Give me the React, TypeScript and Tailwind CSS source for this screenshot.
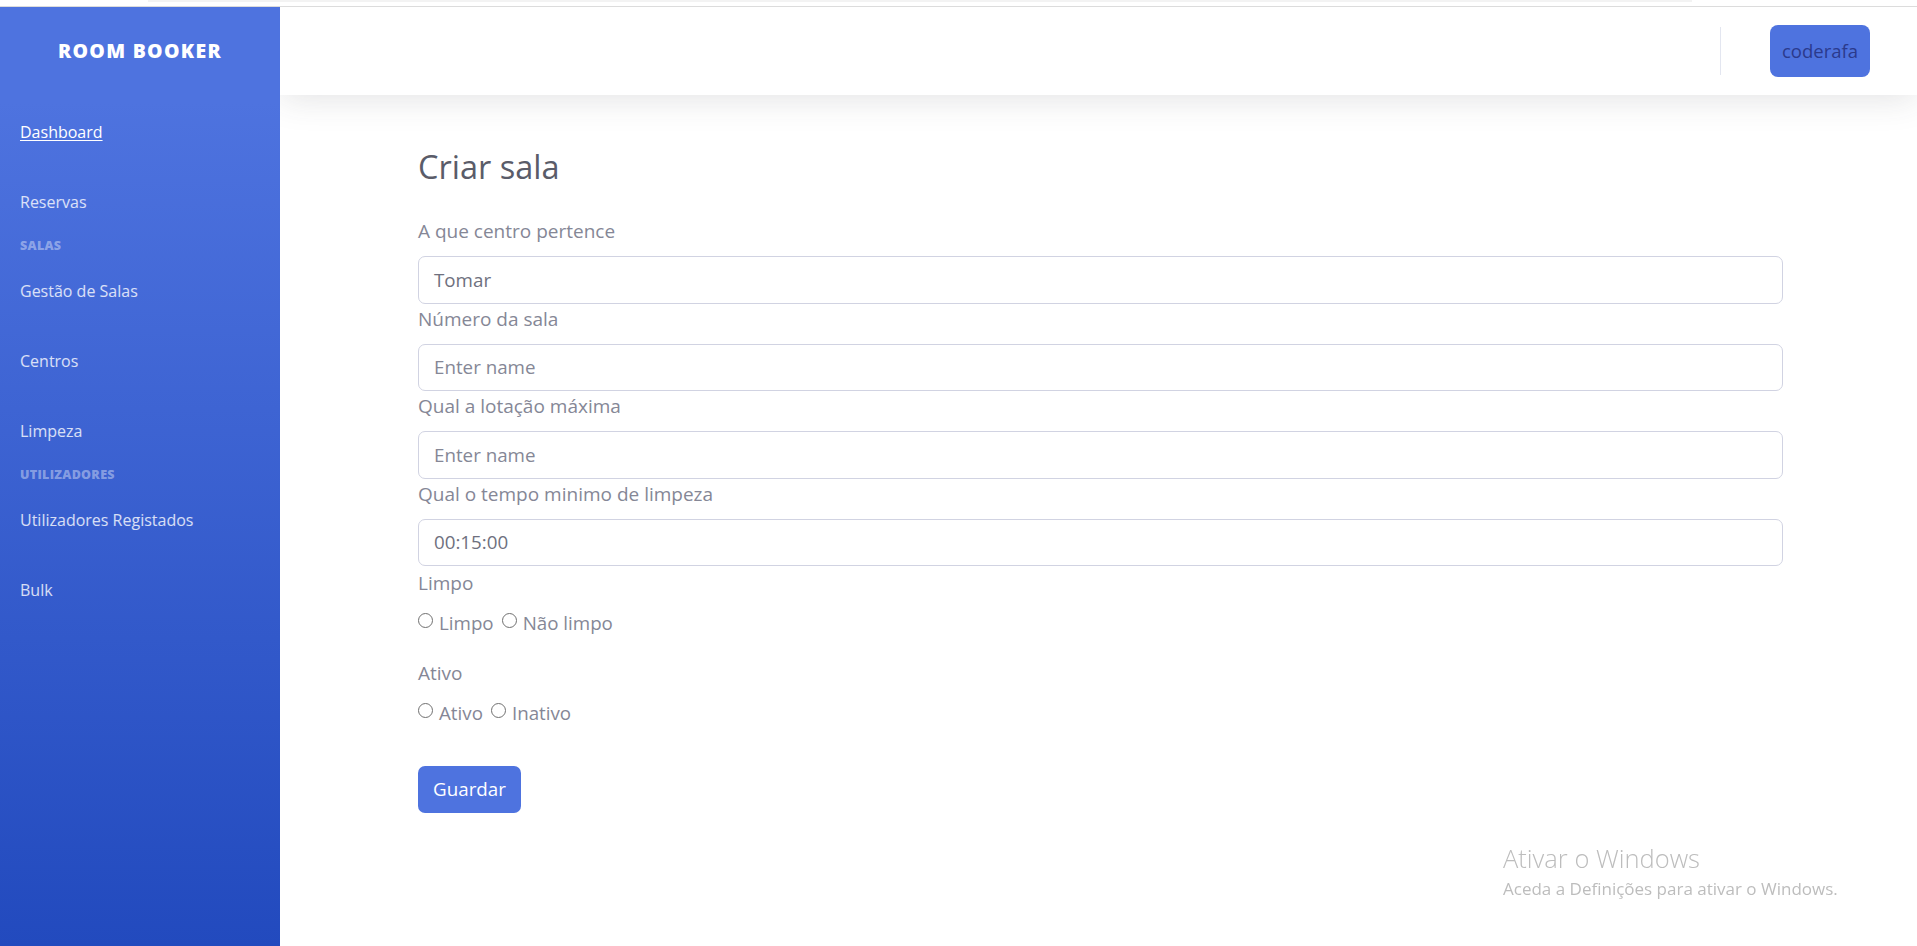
import React from "react";

const font = { fontFamily: '"Open Sans", "Noto Sans", sans-serif' };

function NavItem({ label, active }: { label: string; active?: boolean }) {
  return (
    <div className="h-[70px] flex items-center px-5">
      <span
        className={
          active
            ? "text-[16px] text-white underline underline-offset-2"
            : "text-[16px] text-white/80"
        }
      >
        {label}
      </span>
    </div>
  );
}

function Heading({ label }: { label: string }) {
  return (
    <div className="h-[19px] flex items-center px-5">
      <span className="text-[12.5px] font-extrabold uppercase text-white/40 tracking-[0.3px]">
        {label}
      </span>
    </div>
  );
}

function Field({ label, value, placeholder }: { label: string; value?: string; placeholder?: string }) {
  return (
    <div>
      <div className="h-[30px] leading-[30px] mb-[10px] text-[19px] text-[#858796]">{label}</div>
      <div className="h-[47.5px] rounded-[7px] border border-[#d1d3e2] flex items-center px-[15px] text-[18.75px]">
        {value ? (
          <span className="text-[#6e707e]">{value}</span>
        ) : (
          <span className="text-[#858796]">{placeholder}</span>
        )}
      </div>
    </div>
  );
}

function Radio({ label, first }: { label: string; first?: boolean }) {
  return (
    <span className={first ? "inline-flex items-center" : "inline-flex items-center ml-[8px]"}>
      <span className="inline-block w-[15px] h-[15px] rounded-full border-[1.5px] border-[#707070] bg-white mr-[6px] -mt-[5px]" />
      <span className="text-[18.75px] text-[#858796]">{label}</span>
    </span>
  );
}

export default function App() {
  return (
    <div className="w-[1917px] h-[946px] overflow-hidden bg-white flex flex-col" style={font}>
      <div className="relative z-10 h-[7px] bg-white border-b border-[#dcdcdc]">
        <div className="ml-[148px] w-[1544px] h-[2px] bg-[#f3f3f3]" />
      </div>
      <div className="flex flex-1">
        <aside className="relative z-10 w-[280px] shrink-0 bg-[linear-gradient(180deg,#4e73df_10%,#224abe_100%)]">
          <div className="h-[88px] flex items-center justify-center">
            <span className="text-white font-extrabold uppercase text-[19.5px] tracking-[1.3px]">
              Room Booker
            </span>
          </div>
          <div className="mt-[2px]">
            <NavItem label="Dashboard" active />
            <NavItem label="Reservas" />
            <Heading label="Salas" />
            <NavItem label="Gestão de Salas" />
            <NavItem label="Centros" />
            <NavItem label="Limpeza" />
            <Heading label="Utilizadores" />
            <NavItem label="Utilizadores Registados" />
            <NavItem label="Bulk" />
          </div>
        </aside>
        <main className="flex-1 flex flex-col">
          <header className="h-[88px] bg-white shadow-[0_3px_35px_0_rgba(58,59,69,0.15)] flex items-center justify-end pr-[47px]">
            <div className="w-px h-[48px] bg-[#e3e6f0] mr-[49px]" />
            <div className="h-[52px] px-[12px] rounded-[8px] bg-[#4e73df] flex items-center text-[18.5px] text-[#2b3a8c]">
              coderafa
            </div>
          </header>
          <div className="ml-[138px] w-[1365px] pt-[51px]">
            <h3 className="h-[42px] leading-[42px] text-[32.5px] text-[#5a5c69] mb-[28px]">Criar sala</h3>
            <div className="flex flex-col">
              <Field label="A que centro pertence" value="Tomar" />
              <Field label="Número da sala" placeholder="Enter name" />
              <Field label="Qual a lotação máxima" placeholder="Enter name" />
              <Field label="Qual o tempo minimo de limpeza" value="00:15:00" />
              <div className="mt-[2px] h-[30px] leading-[30px] mb-[10px] text-[19px] text-[#858796]">Limpo</div>
              <div className="h-[30px] flex items-center">
                <Radio label="Limpo" first />
                <Radio label="Não limpo" />
              </div>
              <div className="mt-[20px] h-[30px] leading-[30px] mb-[10px] text-[19px] text-[#858796]">Ativo</div>
              <div className="h-[30px] flex items-center">
                <Radio label="Ativo" first />
                <Radio label="Inativo" />
              </div>
              <div className="mt-[38px]">
                <button className="h-[47px] w-[103px] rounded-[7px] bg-[#4e73df] text-white text-[18.75px] flex items-center justify-center">
                  Guardar
                </button>
              </div>
            </div>
          </div>
        </main>
      </div>
      <div className="fixed left-[1503px] top-[842px] text-[#bdbdbd] pointer-events-none">
        <div className="text-[25.5px] font-light leading-[32px]">Ativar o Windows</div>
        <div className="text-[17px] leading-[22px] mt-[4px]">Aceda a Definições para ativar o Windows.</div>
      </div>
    </div>
  );
}
